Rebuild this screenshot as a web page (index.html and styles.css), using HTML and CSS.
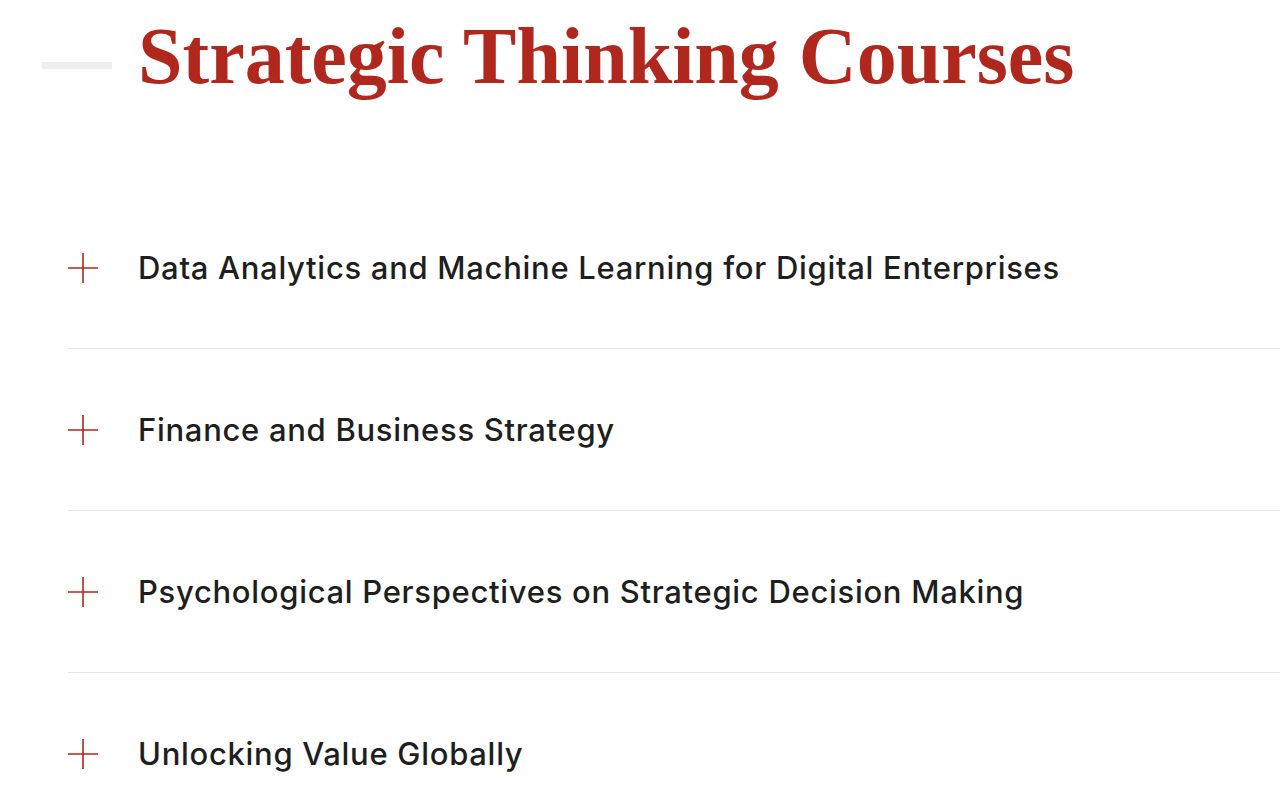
FILE: index.html
```html
<!DOCTYPE html>
<html lang="en">

<head>
    <meta charset="UTF-8">
    <meta name="viewport" content="width=device-width, initial-scale=1.0">
    <title>Strategic Thinking Courses</title>
    <link rel="stylesheet" href="styles.css">
</head>

<body>
    <div class="page">
        <div class="section-head">
            <span class="head-rule"></span>
            <h1>Strategic Thinking Courses</h1>
        </div>

        <ul class="course-list">
            <li class="course">
                <svg class="plus" viewBox="0 0 30 30" width="30" height="30">
                    <path d="M15 0V30M0 15H30" />
                </svg>
                <span class="course-title">Data Analytics and Machine Learning for Digital Enterprises</span>
            </li>
            <li class="course">
                <svg class="plus" viewBox="0 0 30 30" width="30" height="30">
                    <path d="M15 0V30M0 15H30" />
                </svg>
                <span class="course-title">Finance and Business Strategy</span>
            </li>
            <li class="course">
                <svg class="plus" viewBox="0 0 30 30" width="30" height="30">
                    <path d="M15 0V30M0 15H30" />
                </svg>
                <span class="course-title">Psychological Perspectives on Strategic Decision Making</span>
            </li>
            <li class="course">
                <svg class="plus" viewBox="0 0 30 30" width="30" height="30">
                    <path d="M15 0V30M0 15H30" />
                </svg>
                <span class="course-title">Unlocking Value Globally</span>
            </li>
        </ul>
    </div>
</body>

</html>
```

FILE: styles.css
```css
body {
    margin: 0;
    padding: 0;
    background-color: #ffffff;
    font-family: "Inter", "Liberation Sans", sans-serif;
    overflow: hidden;
}

.page {
    padding-top: 8px;
}

.section-head {
    display: flex;
    align-items: flex-start;
    gap: 26px;
    padding-left: 42px;
}

.head-rule {
    display: block;
    flex-shrink: 0;
    width: 70px;
    height: 7px;
    margin-top: 54px;
    background-color: #eeeeee;
}

h1 {
    margin: 0;
    font-family: "Liberation Serif", serif;
    font-weight: bold;
    font-size: 80px;
    line-height: 1.2;
    color: #b0271d;
}

.course-list {
    list-style: none;
    margin: 83px 0 0 68px;
    padding: 0;
}

.course {
    display: flex;
    align-items: center;
    gap: 40px;
    height: 161px;
    border-bottom: 1px solid #e6e6e6;
}

.plus {
    flex-shrink: 0;
    fill: none;
    stroke: #b0271d;
    stroke-width: 1.6;
}

.course-title {
    font-size: 31px;
    font-weight: 500;
    letter-spacing: 0.7px;
    color: #1e1e1e;
}
```
